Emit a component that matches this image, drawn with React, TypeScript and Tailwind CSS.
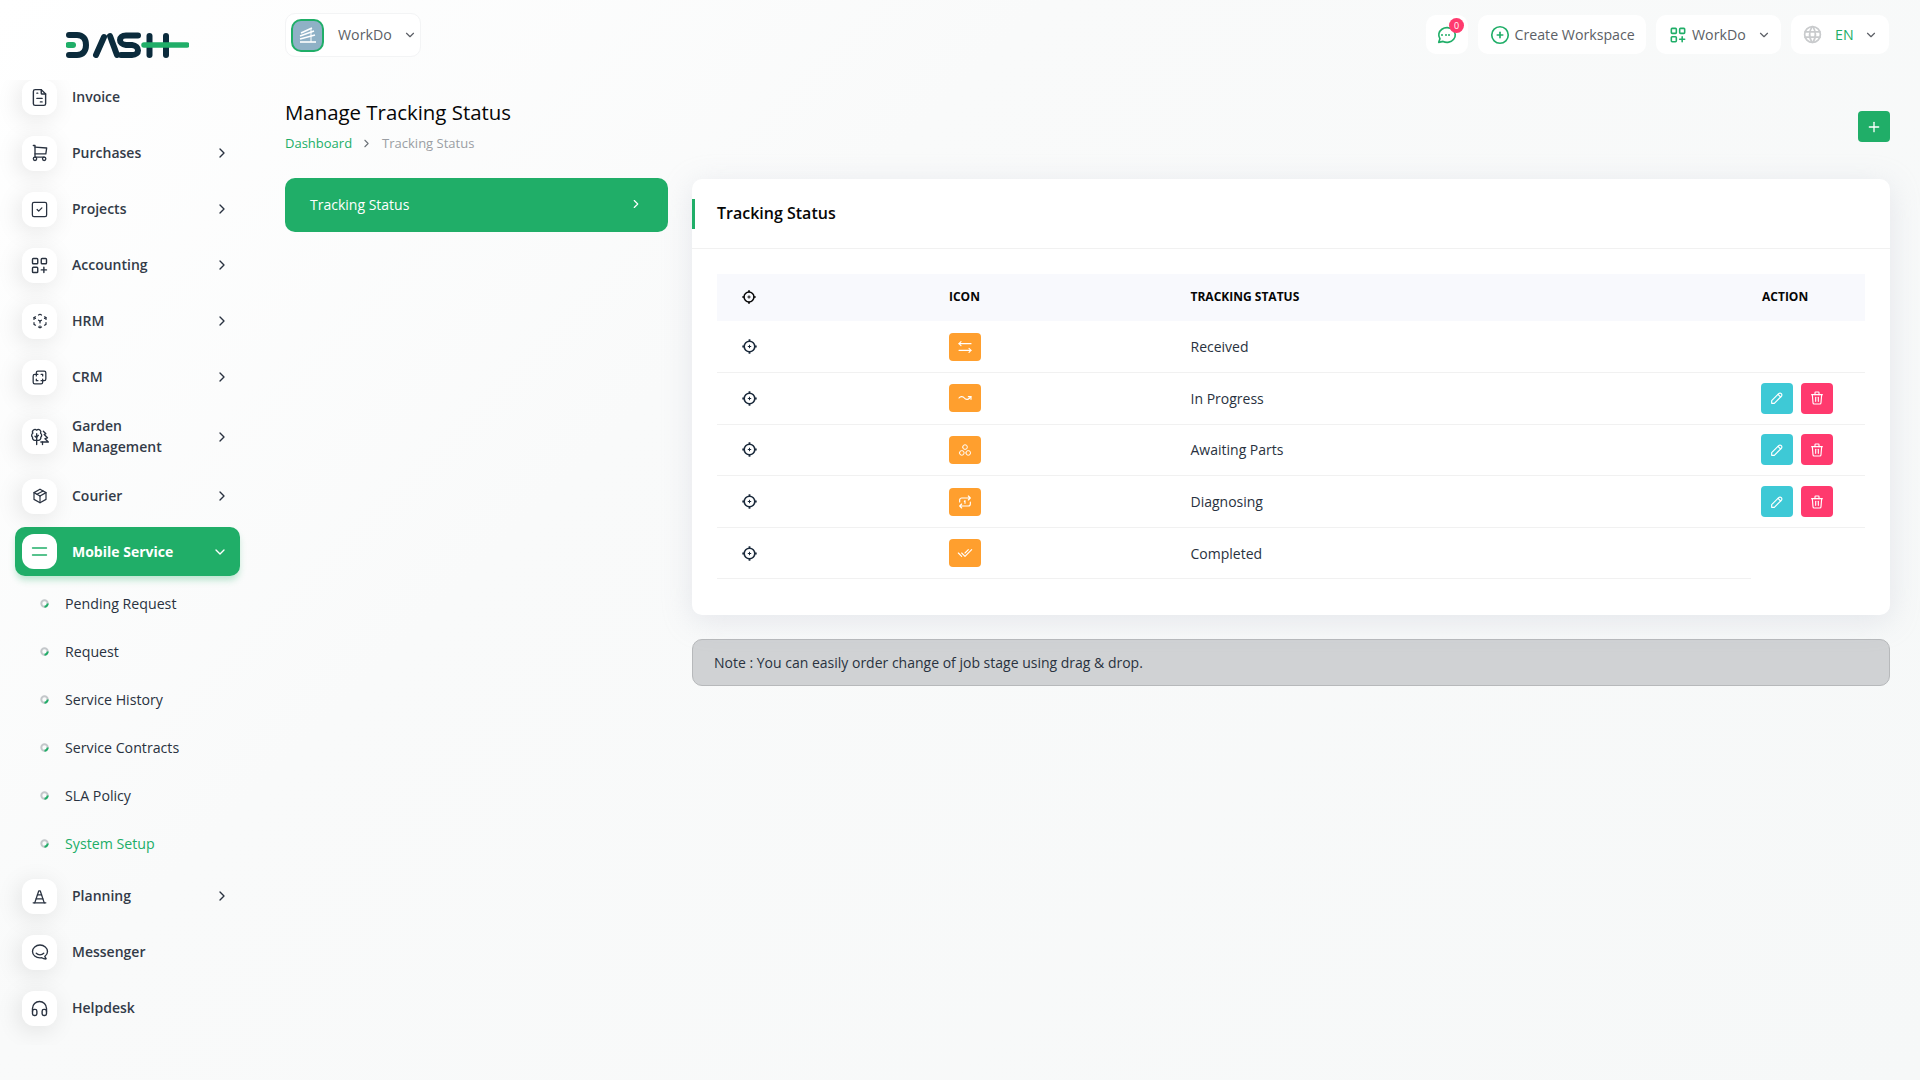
import React from "react";
import {
  TbFileInvoice, TbShoppingCart, TbSquareCheck, TbLayoutGridAdd, TbCube3dSphere, TbLayersDifference, TbTrees, TbPackage, TbMenu, TbTrafficCone, TbBrandHipchat, TbHeadphones,
  TbChevronRight, TbChevronDown, TbCirclePlus, TbWorld, TbPlus, TbArrowsLeftRight, TbArrowWaveRightUp, TbCircles, TbRepeatOnce, TbChecks, TbPencil, TbTrash, TbMessageCircle,
} from "react-icons/tb";

type Item = { label: string; icon: React.ComponentType<any>; arrow?: boolean; tall?: boolean; size?: number };

const Row = ({ label, icon: Icon, arrow, tall, size = 21 }: Item) => (
  <div className={`mx-[15px] flex items-center pl-[7px] pr-[10px] ${tall ? "h-[63px]" : "h-[56px]"}`}>
    <span className="flex h-[35px] w-[35px] shrink-0 items-center justify-center rounded-[12px] bg-white shadow-[-3px_4px_23px_rgba(0,0,0,0.1)]">
      <Icon size={size} strokeWidth={1.6} className="text-[#293240]" />
    </span>
    <span className="ml-[15px] mt-[-1px] w-[110px] text-[14px] font-semibold leading-[21px] text-[#333b48]">{label}</span>
    {arrow && <TbChevronRight size={16} className="ml-auto text-[#293240]" />}
  </div>
);

const SubItem = ({ label, active }: { label: string; active?: boolean }) => (
  <div className={`flex h-[48px] items-center pb-[1px] pl-[40px] text-[14.2px] ${active ? "text-[#20ae68]" : "text-[#293240]"}`}>
    <svg width="9" height="9" viewBox="0 0 9 9" className="shrink-0">
      <circle cx="4.5" cy="4.5" r="3.2" fill="none" stroke="#c3c7ca" strokeWidth="2" />
      <path d="M7.7 4.5A3.2 3.2 0 0 1 4.5 7.7" fill="none" stroke="#20ae68" strokeWidth="2" />
    </svg>
    <span className="ml-[16px]">{label}</span>
  </div>
);

const Logo = () => (
  <svg width="123" height="28" viewBox="0 0 123 28" fill="none" strokeLinecap="round" strokeLinejoin="round">
    <g stroke="#0b2b3c" strokeWidth="6">
      <path d="M3 4H11C17 4 20 8 20 14C20 20 17 24 11 24H3" />
      <path d="M30 24L38 6" />
      <path d="M44 5L51 24" />
      <path d="M72 4.500H60C52 4.500 52 13 60 14H66C74 15 74 24 66 24H55" />
      <path d="M83.500 5V24" />
      <path d="M100 5V24" />
    </g>
    <path d="M2.500 14H7" stroke="#20ae68" strokeWidth="6" />
    <path d="M78 14H121" stroke="#20ae68" strokeWidth="5.500" />
  </svg>
);

const Crosshair = ({ size = 15 }: { size?: number }) => (
  <svg width={size} height={size} viewBox="0 0 15 15" fill="none" stroke="currentColor" className="block">
    <circle cx="7.500" cy="7.500" r="5.300" strokeWidth="1.600" />
    <path d="M7.500 0.300V2.400M7.500 12.600V14.700M0.300 7.500H2.400M12.600 7.500H14.700" strokeWidth="1.800" />
    <path d="M7.500 5.800V9.200M5.800 7.500H9.200" strokeWidth="1" />
  </svg>
);

const Pill = ({ children, className = "" }: { children: React.ReactNode; className?: string }) => (
  <div className={`flex h-[39px] items-center rounded-[10px] bg-white text-[14.2px] text-[#5c5f66] ${className}`}>{children}</div>
);

const rows = [
  { icon: TbArrowsLeftRight, label: "Received", size: 16 },
  { icon: TbArrowWaveRightUp, label: "In Progress", action: true, size: 16 },
  { icon: TbCircles, label: "Awaiting Parts", action: true, size: 14 },
  { icon: TbRepeatOnce, label: "Diagnosing", action: true, size: 16 },
  { icon: TbChecks, label: "Completed", last: true, size: 16 },
];

export default function App() {
  return (
    <div className="flex h-[1080px] w-[1920px] overflow-hidden bg-[linear-gradient(135deg,#ffffff_0%,#f9fafa_35%,#f6f8f8_100%)] font-['Open_Sans',sans-serif] text-[#293240]">
      <aside className="w-[255px] shrink-0">
        <div className="flex h-[80px] items-start pl-[66px] pt-[31px]">
          <Logo />
        </div>
        <div className="h-[965px] overflow-hidden">
          <div className="mt-[-11px]">
            <Row label="Invoice" icon={TbFileInvoice} />
            <Row label="Purchases" icon={TbShoppingCart} size={20} arrow />
            <Row label="Projects" icon={TbSquareCheck} size={19} arrow />
            <Row label="Accounting" icon={TbLayoutGridAdd} arrow />
            <Row label="HRM" icon={TbCube3dSphere} size={18} arrow />
            <Row label="CRM" icon={TbLayersDifference} size={19} arrow />
            <Row label="Garden Management" icon={TbTrees} size={20} arrow tall />
            <Row label="Courier" icon={TbPackage} size={18} arrow />
            <div className="mx-[15px] mb-[4px] mt-[3px] flex h-[49px] items-center rounded-[10px] bg-[#20ae68] pl-[7px] pr-[12px] shadow-[0_5px_7px_-1px_rgba(32,174,104,0.3)]">
              <span className="flex h-[35px] w-[35px] shrink-0 items-center justify-center rounded-[12px] bg-white">
                <TbMenu size={21} strokeWidth={1.6} className="text-[#20ae68]" />
              </span>
              <span className="ml-[15px] text-[14px] font-bold text-white">Mobile Service</span>
              <TbChevronDown size={16} className="ml-auto text-white" />
            </div>
            <SubItem label="Pending Request" />
            <SubItem label="Request" />
            <SubItem label="Service History" />
            <SubItem label="Service Contracts" />
            <SubItem label="SLA Policy" />
            <SubItem label="System Setup" active />
            <Row label="Planning" icon={TbTrafficCone} size={19} arrow />
            <Row label="Messenger" icon={TbBrandHipchat} size={20} />
            <Row label="Helpdesk" icon={TbHeadphones} />
          </div>
        </div>
      </aside>

      <main className="min-w-0 flex-1 pl-[30px] pr-[30px]">
        <header className="flex h-[70px] items-start justify-between pt-[13px]">
          <div className="flex h-[44px] w-[136px] items-center rounded-[10px] border border-[#f3f4f5] bg-white pl-[5px]">
            <span className="flex h-[33px] w-[33px] items-center justify-center rounded-[10px] border-2 border-[#20ae68] bg-[#8fb1c6]">
              <svg width="18" height="16" viewBox="0 0 18 16" fill="none" stroke="#fff" strokeWidth="1.600">
                <path d="M2 6L13 1" />
                <path d="M1 9L15 4" />
                <path d="M1 12L16 8" />
                <path d="M1 15H17" />
                <path d="M12 1V15" strokeWidth="1" />
              </svg>
            </span>
            <span className="ml-[14px] text-[14.2px] text-[#5c5f66]">WorkDo</span>
            <TbChevronDown size={14} className="ml-[11px] text-[#5c5f66]" />
          </div>
          <div className="mr-px mt-[2px] flex gap-[10px]">
            <Pill className="relative w-[42px] justify-center">
              <TbMessageCircle size={22} strokeWidth={1.8} className="text-[#20ae68]" />
              <span className="absolute left-[15px] top-[18.5px] flex gap-[1.500px]">
                <i className="h-[2px] w-[2px] rounded-full bg-[#20ae68]" />
                <i className="h-[2px] w-[2px] rounded-full bg-[#20ae68]" />
                <i className="h-[2px] w-[2px] rounded-full bg-[#20ae68]" />
              </span>
              <span className="absolute left-[23px] top-[3px] flex h-[15px] w-[15px] items-center justify-center rounded-full bg-[#ff3a6e] text-[9px] leading-none text-white">0</span>
            </Pill>
            <Pill className="w-[168px] pl-[11px]">
              <TbCirclePlus size={22} strokeWidth={1.8} className="text-[#20ae68]" />
              <span className="ml-[3.500px] mt-[1px]">Create Workspace</span>
            </Pill>
            <Pill className="w-[125px] pl-[12px]">
              <TbLayoutGridAdd size={20} strokeWidth={1.9} className="text-[#20ae68]" />
              <span className="ml-[4px] mt-[1px]">WorkDo</span>
              <TbChevronDown size={14} className="ml-[11px]" />
            </Pill>
            <Pill className="w-[98px] pl-[11px]">
              <TbWorld size={21} className="text-[#c9cbcd]" />
              <span className="ml-[12px] mt-[1px] font-medium text-[#20ae68]">EN</span>
              <TbChevronDown size={14} className="ml-[10px]" />
            </Pill>
          </div>
        </header>

        <div className="flex h-[108px] items-start justify-between">
          <div>
            <h1 className="mt-[26px] text-[20.4px] font-medium leading-[32px] text-[#060606]">Manage Tracking Status</h1>
            <div className="mt-[5px] flex items-center text-[13px] leading-[20px]">
              <span className="text-[#20ae68]">Dashboard</span>
              <TbChevronRight size={13} className="ml-[8px] text-[#6c7278]" />
              <span className="ml-[9px] text-[#9a9ea3]">Tracking Status</span>
            </div>
          </div>
          <button className="mt-[41px] flex h-[31px] w-[32px] items-center justify-center rounded-[4px] bg-[#20ae68] text-white">
            <TbPlus size={16} />
          </button>
        </div>

        <div className="flex items-start gap-[24px]">
          <div className="flex h-[54px] w-[383px] shrink-0 items-center justify-between rounded-[10px] bg-[#20ae68] pb-[2px] pl-[25px] pr-[25px] text-[14px] text-white">
            <span>Tracking Status</span>
            <TbChevronRight size={14} />
          </div>
          <div className="min-w-0 flex-1">
            <section className="relative mt-px h-[436px] rounded-[10px] bg-white shadow-[0_6px_30px_rgba(182,186,203,0.3)]">
              <div className="relative flex h-[70px] items-center border-b border-[#f1f1f1] pb-[2px] pl-[25px]">
                <span className="absolute left-0 top-[20px] h-[30px] w-[3px] bg-[#20ae68]" />
                <h2 className="text-[16px] font-semibold text-[#060606]">Tracking Status</h2>
              </div>
              <div className="px-[25px] pt-[25px]">
                <table className="w-full table-fixed border-collapse">
                  <colgroup>
                    <col className="w-[208px]" />
                    <col className="w-[241px]" />
                    <col className="w-[585px]" />
                    <col className="w-[114px]" />
                  </colgroup>
                  <thead>
                    <tr className="h-[47px] bg-[#f8f9fd] text-left text-[12px] font-bold uppercase text-[#060606]">
                      <th className="pb-[2px] pl-[25px]"><Crosshair size={14} /></th>
                      <th className="pb-[2px] pl-[24px]">Icon</th>
                      <th className="pb-[2px] pl-[24.500px]">Tracking Status</th>
                      <th className="pb-[2px] pl-[11px]">Action</th>
                    </tr>
                  </thead>
                  <tbody className="text-[14px] text-[#293240]">
                    {rows.map(({ icon: Icon, label, action, last, size }) => (
                      <tr key={label} className="h-[51.6px]">
                        <td className="border-b border-[#f1f1f1] pl-[25px]"><span className="block text-[#1c2b3c]"><Crosshair /></span></td>
                        <td className="border-b border-[#f1f1f1] pl-[24px]">
                          <span className="flex h-[28px] w-[32px] items-center justify-center rounded-[4px] bg-[#ff9f2e] text-white"><Icon size={size} strokeWidth={1.7} /></span>
                        </td>
                        <td className="border-b border-[#f1f1f1] pl-[24.500px]">{label}</td>
                        <td className={last ? "" : "border-b border-[#f1f1f1]"}>
                          {action && (
                            <div className="flex gap-[8px] pl-[10px]">
                              <span className="flex h-[31px] w-[32px] items-center justify-center rounded-[4px] bg-[#3ec9d6] text-white"><TbPencil size={16} strokeWidth={1.7} /></span>
                              <span className="flex h-[31px] w-[32px] items-center justify-center rounded-[4px] bg-[#ff3a6e] text-white"><TbTrash size={16} strokeWidth={1.7} /></span>
                            </div>
                          )}
                        </td>
                      </tr>
                    ))}
                  </tbody>
                </table>
              </div>
            </section>
            <div className="mt-[24px] flex h-[47px] items-center rounded-[10px] border border-[#b7b9bb] bg-[#d0d2d4] pl-[21px] text-[14px] text-[#293240]">
              Note : You can easily order change of job stage using drag &amp; drop.
            </div>
          </div>
        </div>
      </main>
    </div>
  );
}
